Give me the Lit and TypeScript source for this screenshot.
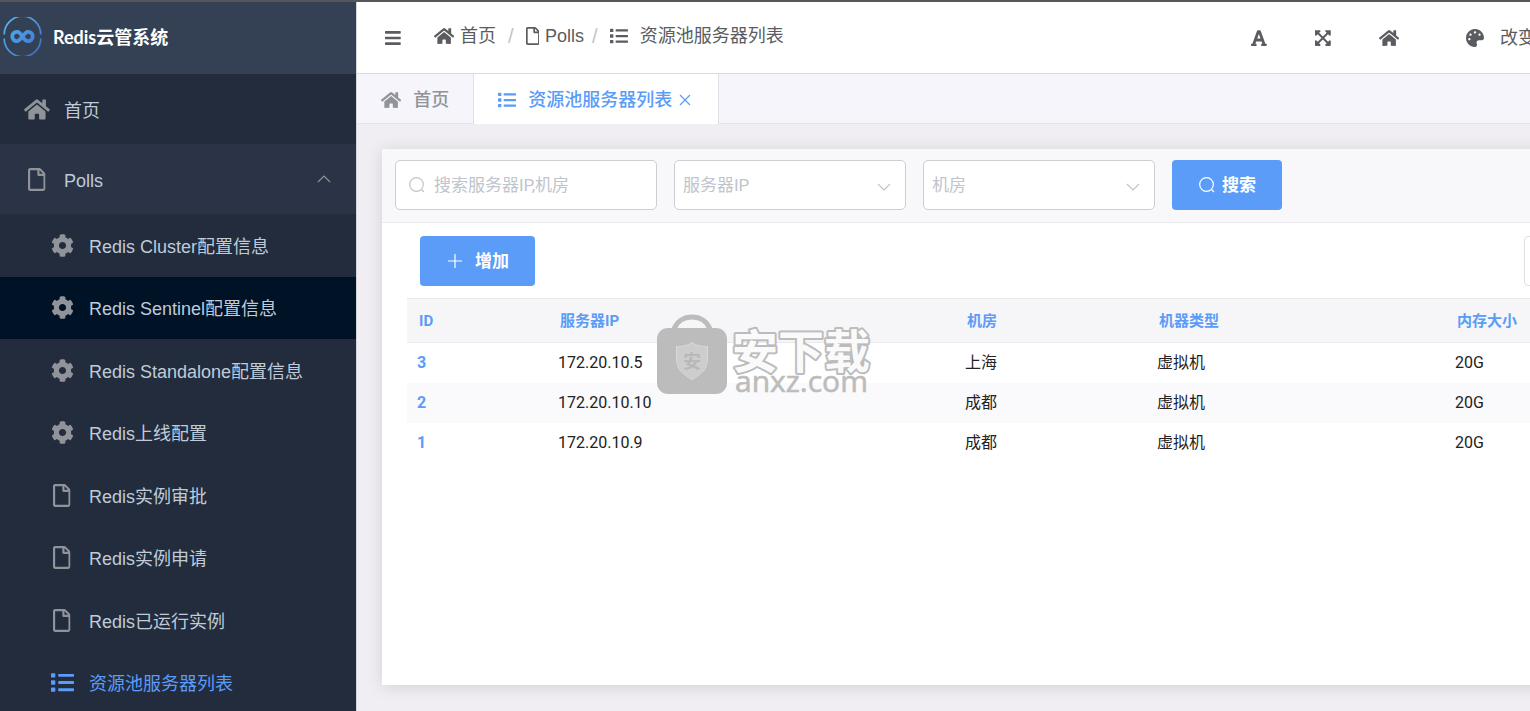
import { LitElement, html, css, svg } from "lit";
import { customElement, property } from "lit/decorators.js";

const GLYPHS: Record<string, { box: string; d: string }> = {
  home: {
    box: "0 0 576 512",
    d: "M280.37 148.26L96 300.11V464a16 16 0 0 0 16 16l112.06-.29a16 16 0 0 0 15.92-16V368a16 16 0 0 1 16-16h64a16 16 0 0 1 16 16v95.64a16 16 0 0 0 16 16.05L464 480a16 16 0 0 0 16-16V300L295.67 148.26a12.19 12.19 0 0 0-15.3 0zM571.6 251.47L488 182.56V44.05a12 12 0 0 0-12-12h-56a12 12 0 0 0-12 12v72.61L318.47 43a48 48 0 0 0-61 0L4.34 251.47a12 12 0 0 0-1.6 16.9l25.5 31A12 12 0 0 0 45.15 301l235.22-193.74a12.19 12.19 0 0 1 15.3 0L530.9 301a12 12 0 0 0 16.9-1.6l25.5-31a12 12 0 0 0-1.7-16.93z",
  },
  file: {
    box: "0 0 384 512",
    d: "M369.9 97.9L286 14C277 5 264.8-.1 252.1-.1H48C21.5 0 0 21.5 0 48v416c0 26.5 21.5 48 48 48h288c26.5 0 48-21.5 48-48V131.9c0-12.7-5.1-25-14.1-34zM332.1 128H256V51.9l76.1 76.1zM48 464V48h160v104c0 13.3 10.7 24 24 24h112v288H48z",
  },
  cog: {
    box: "0 0 512 512",
    d: "M487.4 315.7l-42.6-24.6c4.3-23.2 4.3-47 0-70.2l42.6-24.6c4.9-2.8 7.1-8.6 5.5-14-11.1-35.6-30-67.8-54.7-94.6-3.8-4.1-10-5.1-14.8-2.3L380.8 110c-17.9-15.4-38.5-27.3-60.8-35.1V25.8c0-5.6-3.9-10.5-9.4-11.7-36.7-8.2-74.3-7.8-109.2 0-5.5 1.2-9.4 6.1-9.4 11.7V75c-22.2 7.9-42.8 19.8-60.8 35.1L88.7 85.5c-4.9-2.8-11-1.9-14.8 2.3-24.7 26.7-43.6 58.9-54.7 94.6-1.7 5.4.6 11.2 5.5 14L67.3 221c-4.3 23.2-4.3 47 0 70.2l-42.6 24.6c-4.9 2.8-7.1 8.6-5.5 14 11.1 35.6 30 67.8 54.7 94.6 3.8 4.1 10 5.1 14.8 2.3l42.6-24.6c17.9 15.4 38.5 27.3 60.8 35.1v49.2c0 5.6 3.9 10.5 9.4 11.7 36.7 8.2 74.3 7.8 109.2 0 5.5-1.2 9.4-6.1 9.4-11.7v-49.2c22.2-7.9 42.8-19.8 60.8-35.1l42.6 24.6c4.9 2.8 11 1.9 14.8-2.3 24.7-26.7 43.6-58.9 54.7-94.6 1.5-5.5-.7-11.3-5.6-14.1zM256 336c-44.1 0-80-35.9-80-80s35.9-80 80-80 80 35.9 80 80-35.9 80-80 80z",
  },
  list: {
    box: "0 0 512 512",
    d: "M80 368H16a16 16 0 0 0-16 16v64a16 16 0 0 0 16 16h64a16 16 0 0 0 16-16v-64a16 16 0 0 0-16-16zm0-320H16A16 16 0 0 0 0 64v64a16 16 0 0 0 16 16h64a16 16 0 0 0 16-16V64a16 16 0 0 0-16-16zm0 160H16a16 16 0 0 0-16 16v64a16 16 0 0 0 16 16h64a16 16 0 0 0 16-16v-64a16 16 0 0 0-16-16zm416 176H176a16 16 0 0 0-16 16v32a16 16 0 0 0 16 16h320a16 16 0 0 0 16-16v-32a16 16 0 0 0-16-16zm0-320H176a16 16 0 0 0-16 16v32a16 16 0 0 0 16 16h320a16 16 0 0 0 16-16V80a16 16 0 0 0-16-16zm0 160H176a16 16 0 0 0-16 16v32a16 16 0 0 0 16 16h320a16 16 0 0 0 16-16v-32a16 16 0 0 0-16-16z",
  },
  bars: {
    box: "0 0 448 512",
    d: "M16 132h416c8.8 0 16-7.2 16-16V76c0-8.8-7.2-16-16-16H16C7.2 60 0 67.2 0 76v40c0 8.8 7.2 16 16 16zm0 160h416c8.8 0 16-7.2 16-16v-40c0-8.8-7.2-16-16-16H16c-8.8 0-16 7.2-16 16v40c0 8.8 7.2 16 16 16zm0 160h416c8.8 0 16-7.2 16-16v-40c0-8.8-7.2-16-16-16H16c-8.8 0-16 7.2-16 16v40c0 8.8 7.2 16 16 16z",
  },
  font: {
    box: "0 0 448 512",
    d: "M432 416h-23.41L277.88 53.69A32 32 0 0 0 247.58 32h-47.16a32 32 0 0 0-30.3 21.69L39.41 416H16a16 16 0 0 0-16 16v32a16 16 0 0 0 16 16h128a16 16 0 0 0 16-16v-32a16 16 0 0 0-16-16h-19.58l23.3-64h152.56l23.3 64H304a16 16 0 0 0-16 16v32a16 16 0 0 0 16 16h128a16 16 0 0 0 16-16v-32a16 16 0 0 0-16-16zM176.85 272L224 142.51 271.15 272z",
  },
  expand: {
    box: "0 0 448 512",
    d: "M448 344v112a23.94 23.94 0 0 1-24 24H312c-21.39 0-32.09-25.9-17-41l36.2-36.2L224 295.6 116.77 402.9 153 439c15.09 15.1 4.39 41-17 41H24a23.94 23.94 0 0 1-24-24V344c0-21.4 25.89-32.1 41-17l36.19 36.2L184.46 256 77.18 148.7 41 185c-15.1 15.1-41 4.4-41-17V56a23.94 23.94 0 0 1 24-24h112c21.39 0 32.09 25.9 17 41l-36.2 36.2L224 216.4l107.23-107.3L295 73c-15.09-15.1-4.39-41 17-41h112a23.94 23.94 0 0 1 24 24v112c0 21.4-25.89 32.1-41 17l-36.19-36.2L263.54 256l107.28 107.3L407 327.1c15.1-15.2 41-4.5 41 16.9z",
  },
  palette: {
    box: "0 0 512 512",
    d: "M204.3 5C104.9 24.4 24.8 104.3 5.2 203.4c-37 187 131.7 326.4 258.8 306.7 41.2-6.4 61.4-54.6 42.5-91.7-23.1-45.4 9.9-98.4 60.9-98.4h79.7c35.8 0 64.8-29.6 64.9-65.3C511.5 97.1 368.1-26.9 204.3 5zM96 320c-17.7 0-32-14.3-32-32s14.3-32 32-32 32 14.3 32 32-14.3 32-32 32zm32-128c-17.7 0-32-14.3-32-32s14.3-32 32-32 32 14.3 32 32-14.3 32-32 32zm128-64c-17.7 0-32-14.3-32-32s14.3-32 32-32 32 14.3 32 32-14.3 32-32 32zm128 64c-17.7 0-32-14.3-32-32s14.3-32 32-32 32 14.3 32 32-14.3 32-32 32z",
  },
};

const LINES: Record<string, ReturnType<typeof svg>> = {
  search: svg`<circle cx="8.500" cy="8.500" r="6.800"/><path d="M13.500 13.500l2.500 2.500"/>`,
  plus: svg`<path d="M9 2v14M2 9h14"/>`,
  close: svg`<path d="M4 4l10 10M14 4L4 14"/>`,
  down: svg`<path d="M3 6l6 6 6-6"/>`,
  up: svg`<path d="M3 12l6-6 6 6"/>`,
};

/** Solid glyph, sized by its height. */
@customElement("solid-icon")
class SolidIcon extends LitElement {
  @property() name = "home";
  static styles = css`
    :host { display: inline-flex; align-items: center; justify-content: center; flex: none; }
    .glyph { display: block; height: var(--size, 18px); width: auto; fill: currentColor; }
  `;
  render() {
    const g = GLYPHS[this.name];
    return html`<svg class="glyph" viewBox=${g.box} aria-hidden="true"><path d=${g.d}></path></svg>`;
  }
}

/** Thin outlined glyph. */
@customElement("line-icon")
class LineIcon extends LitElement {
  @property() name = "search";
  static styles = css`
    :host { display: inline-flex; flex: none; }
    .glyph { display: block; width: 18px; height: 18px; fill: none; stroke: currentColor; stroke-width: 1.2; }
  `;
  render() {
    return html`<svg class="glyph" viewBox="0 0 18 18" aria-hidden="true">${LINES[this.name]}</svg>`;
  }
}

const MENU = [
  { icon: "cog", label: "Redis Cluster配置信息", state: "" },
  { icon: "cog", label: "Redis Sentinel配置信息", state: "hovered" },
  { icon: "cog", label: "Redis Standalone配置信息", state: "" },
  { icon: "cog", label: "Redis上线配置", state: "" },
  { icon: "file", label: "Redis实例审批", state: "" },
  { icon: "file", label: "Redis实例申请", state: "" },
  { icon: "file", label: "Redis已运行实例", state: "" },
  { icon: "list", label: "资源池服务器列表", state: "current" },
];

@customElement("side-menu")
class SideMenu extends LitElement {
  static styles = css`
    :host { display: block; background: #232c3c; color: #bfcbd9; overflow: hidden; }
    .brand { display: flex; align-items: center; gap: 11px; box-sizing: border-box; height: 72px; padding: 0 0 4px 3px; background: #344154; color: #fff; font: bold 18px Lato, "Noto Sans CJK SC", sans-serif; }
    .logo { width: 39px; height: 39px; flex: none; }
    .title { margin: 0; font: inherit; white-space: nowrap; }
    ul { list-style: none; margin: 0; padding: 0; }
    .row { display: flex; align-items: center; box-sizing: border-box; height: 70px; padding: 0 23px; gap: 13px; width: 100%; border: 0; background: none; color: inherit; font: inherit; text-decoration: none; text-align: left; white-space: nowrap; }
    .group { background: #2b3447; }
    .icon { width: 28px; color: #909399; --size: 23px; }
    .label { flex: 1; padding-top: 3px; }
    .arrow { color: #909399; }
    .sub { display: grid; grid-auto-rows: 1fr; height: 500px; }
    .sub .row { height: 100%; padding-left: 48px; }
    .hovered { background: #001226; }
    .current, .current .icon { color: #5a9cf8; }
  `;
  render() {
    return html`
      <header class="brand">
        <svg class="logo" viewBox="0 0 39 39" aria-hidden="true">
          <defs>
            <linearGradient id="ring" gradientUnits="userSpaceOnUse" x1="4" y1="4" x2="34" y2="36">
              <stop offset="0" stop-color="#55b4ee" /><stop offset="1" stop-color="#3f6fce" />
            </linearGradient>
          </defs>
          <path d="M1.200 17.500a18.300 18.300 0 0 1 36.600 0M1.200 21.500a18.300 18.300 0 0 0 36.600 0" fill="none" stroke="url(#ring)" stroke-width="1.700" />
          <path d="M19.500 19.500c-1.800-3-3.300-4.700-5.500-4.700a4.700 4.700 0 0 0 0 9.400c3.800 0 7.200-9.400 11-9.400a4.700 4.700 0 0 1 0 9.400c-2.200 0-3.700-1.700-5.500-4.700z" fill="none" stroke="url(#ring)" stroke-width="3.800" />
        </svg>
        <h1 class="title">Redis云管系统</h1>
      </header>
      <nav>
        <ul>
          <li><a class="row" href="#"><solid-icon class="icon" name="home"></solid-icon><span class="label">首页</span></a></li>
          <li>
            <button class="row group" type="button" aria-expanded="true">
              <solid-icon class="icon" name="file"></solid-icon><span class="label">Polls</span>
              <line-icon class="arrow" name="up"></line-icon>
            </button>
            <ul class="sub">
              ${MENU.map((m) => html`<li><a class="row ${m.state}" href="#"><solid-icon class="icon" name=${m.icon}></solid-icon><span class="label">${m.label}</span></a></li>`)}
            </ul>
          </li>
        </ul>
      </nav>`;
  }
}

@customElement("top-bar")
class TopBar extends LitElement {
  static styles = css`
    :host { display: flex; align-items: center; justify-content: space-between; box-sizing: border-box; height: 72px; padding: 0 54px 0 28px; background: #fff; border-bottom: 1px solid #d8dce5; color: #5a5c60; white-space: nowrap; }
    button { display: inline-flex; align-items: center; gap: 16px; padding: 0; border: 0; background: none; color: inherit; font: inherit; }
    .left, .crumbs, .tools { display: flex; align-items: center; }
    .left { gap: 33px; }
    .crumbs { list-style: none; margin: 0; padding: 0 0 4px; }
    .crumbs li { display: flex; align-items: center; }
    .crumbs li + li::before { content: "/"; color: #c0c4cc; font-size: 20px; padding: 0 12px; }
    .crumbs li:nth-child(3)::before { padding: 0 12px 0 8px; }
    a { display: flex; align-items: center; gap: 6px; color: inherit; text-decoration: none; }
    .page { gap: 12px; }
    .tools { gap: 48px; }
    .theme { margin-left: 19px; }
  `;
  render() {
    return html`
      <div class="left">
        <button type="button" aria-label="Menu"><solid-icon name="bars"></solid-icon></button>
        <ol class="crumbs">
          <li><a href="#"><solid-icon name="home"></solid-icon>首页</a></li>
          <li><a href="#"><solid-icon name="file"></solid-icon>Polls</a></li>
          <li><a class="page" href="#"><solid-icon name="list"></solid-icon>资源池服务器列表</a></li>
        </ol>
      </div>
      <div class="tools">
        <button type="button" aria-label="Font"><solid-icon name="font"></solid-icon></button>
        <button type="button" aria-label="Fullscreen"><solid-icon name="expand"></solid-icon></button>
        <button type="button" aria-label="Home"><solid-icon name="home"></solid-icon></button>
        <button class="theme" type="button"><solid-icon name="palette"></solid-icon>改变</button>
      </div>`;
  }
}

const SERVERS = [
  { id: 3, ip: "172.20.10.5", room: "上海", kind: "虚拟机", memory: "20G" },
  { id: 2, ip: "172.20.10.10", room: "成都", kind: "虚拟机", memory: "20G" },
  { id: 1, ip: "172.20.10.9", room: "成都", kind: "虚拟机", memory: "20G" },
];

@customElement("server-panel")
class ServerPanel extends LitElement {
  static styles = css`
    :host { display: flex; flex-direction: column; background: #fff; box-shadow: 0 2px 16px rgba(0, 0, 0, 0.12); font: 17px/24px Roboto, "Noto Sans CJK SC", sans-serif; }
    .filters { display: flex; gap: 17px; padding: 11px 13px 12px; background: #f8f7fa; border-bottom: 1px solid #ebe9ee; }
    .field { display: flex; align-items: center; box-sizing: border-box; height: 50px; border: 1px solid #cdced4; border-radius: 5px; background: #fff; color: #c0c4cc; }
    .search { width: 262px; padding: 0 12px; gap: 8px; }
    .pick { display: grid; width: 232px; }
    .pick > * { grid-area: 1 / 1; }
    .pick line-icon { justify-self: end; padding: 4px 12px 0 0; pointer-events: none; }
    input, select { width: 100%; min-width: 0; padding: 0; border: 0; outline: 0; background: none; color: inherit; font: inherit; appearance: none; }
    select { height: 48px; padding: 0 36px 0 8px; }
    input::placeholder { color: inherit; opacity: 1; }
    .btn { display: flex; align-items: center; justify-content: center; height: 50px; padding: 0 26px; gap: 6px; border: 0; border-radius: 4px; background: #5a9cf8; color: #fff; font: inherit; font-weight: bold; }
    .add { gap: 11px; }
    .actions { display: flex; justify-content: space-between; padding: 13px 16px 12px 38px; }
    .more { width: 50px; height: 50px; border: 1px solid #dcdfe6; border-radius: 4px; background: #fff; }
    .sheet { position: relative; padding: 0 16px 0 25px; }
    table { width: 100%; table-layout: fixed; border-collapse: collapse; font-size: 16px; color: #222; }
    .c-id { width: 141px; } .c-ip { width: 407px; } .c-room { width: 192px; } .c-kind { width: 298px; }
    th { height: 43px; padding: 0 12px; text-align: left; background: #f6f5f8; border-top: 1px solid #e9e8ec; border-bottom: 1px solid #e9e8ec; color: #5a9cf8; font-size: 15px; font-weight: bold; }
    td { height: 40px; padding: 0 10px; }
    tbody tr:nth-child(even) { background: #faf9fc; }
    .id { color: #5a9cf8; font-weight: bold; }
    .stamp { position: absolute; left: 274px; top: 15px; width: 220px; height: 84px; pointer-events: none; }
    .hanzi { font: bold 46px "Noto Sans CJK SC", sans-serif; fill: #fafafb; stroke: #bcbcbc; stroke-width: 4px; stroke-linejoin: round; paint-order: stroke; }
    .site { font: 30px "Open Sans", sans-serif; fill: #bcbcbc; stroke: #bcbcbc; stroke-width: 0.6px; }
    .seal { font: bold 18px "Noto Sans CJK SC", sans-serif; fill: #b8b8b8; }
  `;
  render() {
    return html`
      <form class="filters" @submit=${(e: Event) => e.preventDefault()}>
        <label class="field search"><line-icon name="search"></line-icon><input type="text" aria-label="搜索" placeholder="搜索服务器IP,机房" /></label>
        <label class="field pick"><select aria-label="服务器IP"><option>服务器IP</option></select><line-icon name="down"></line-icon></label>
        <label class="field pick"><select aria-label="机房"><option>机房</option></select><line-icon name="down"></line-icon></label>
        <button class="btn" type="submit"><line-icon name="search"></line-icon>搜索</button>
      </form>
      <div class="actions">
        <button class="btn add" type="button"><line-icon name="plus"></line-icon>增加</button>
        <button class="more" type="button" aria-label="More"></button>
      </div>
      <div class="sheet">
        <table>
          <colgroup><col class="c-id" /><col class="c-ip" /><col class="c-room" /><col class="c-kind" /><col /></colgroup>
          <thead><tr><th>ID</th><th>服务器IP</th><th>机房</th><th>机器类型</th><th>内存大小</th></tr></thead>
          <tbody>
            ${SERVERS.map((s) => html`<tr><td class="id">${s.id}</td><td>${s.ip}</td><td>${s.room}</td><td>${s.kind}</td><td>${s.memory}</td></tr>`)}
          </tbody>
        </table>
        <svg class="stamp" viewBox="0 0 220 84">
          <path d="M18 16c3-8 10-12 18-12s15 4 18 12" fill="none" stroke="#bcbcbc" stroke-width="5" />
          <rect x="1" y="15" width="70" height="66" rx="11" fill="#bcbcbc" />
          <path d="M36 29.500c5 3.500 10 4 15.500 4v13c0 9-6 15-15.500 20c-9.500-5-15.500-11-15.500-20v-13c5.500 0 10.500-.5 15.500-4z" fill="#cdcdcd" stroke="#d8d8d8" />
          <text class="seal" x="27" y="55">安</text>
          <text class="hanzi" x="76" y="55">安下载</text>
          <text class="site" x="79" y="79">anxz.com</text>
        </svg>
      </div>`;
  }
}

@customElement("app-root")
class AppRoot extends LitElement {
  static styles = css`
    :host { display: grid; grid-template-columns: 356px minmax(0, 1fr); box-sizing: border-box; height: 100vh; overflow: hidden; border-top: 2px solid #56575b; background: #f0eef2; color: #303133; font: 18px/26px "Liberation Sans", "Noto Sans CJK SC", sans-serif; }
    .main { overflow: hidden; border-left: 1px solid #d5d5da; }
    .stage { display: flex; flex-direction: column; height: 100%; width: calc(100% + 60px); }
    .tabs { display: flex; flex: none; height: 49px; border-bottom: 1px solid #e4e4ec; background: #f5f5fb; }
    .tab { display: flex; align-items: center; box-sizing: border-box; height: 50px; padding: 2px 24px 0; gap: 12px; border: 0; border-right: 1px solid #dcdfe6; background: none; color: #909399; font: inherit; font-weight: 500; }
    .open { background: #fff; color: #5a9cf8; }
    .close { margin-left: -8px; }
    server-panel { flex: 1; margin: 25px 0 26px 25px; }
  `;
  render() {
    return html`
      <side-menu></side-menu>
      <main class="main">
        <div class="stage">
          <top-bar></top-bar>
          <div class="tabs" role="tablist">
            <button class="tab" role="tab" type="button"><solid-icon name="home"></solid-icon>首页</button>
            <button class="tab open" role="tab" type="button" aria-selected="true">
              <solid-icon name="list"></solid-icon>资源池服务器列表<line-icon class="close" name="close"></line-icon>
            </button>
          </div>
          <server-panel></server-panel>
        </div>
      </main>`;
  }
}
